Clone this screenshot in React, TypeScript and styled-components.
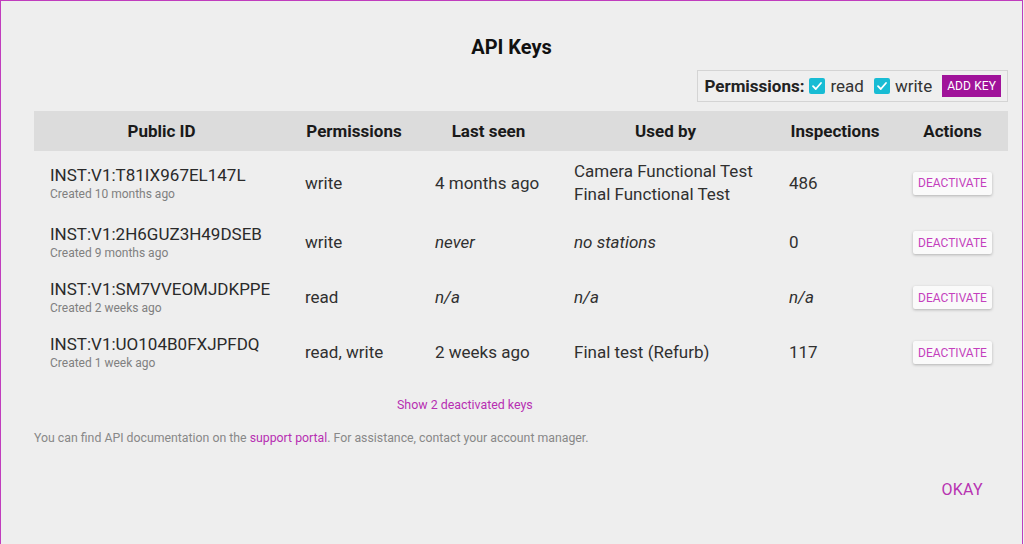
import { createGlobalStyle, styled } from 'styled-components';

interface KeyRow {
    id: string;
    created: string;
    permissions: string;
    lastSeen: string;
    usedBy: string[];
    inspections: string;
    muted?: boolean;
}

const keys: KeyRow[] = [
    {
        id: 'INST:V1:T81IX967EL147L',
        created: 'Created 10 months ago',
        permissions: 'write',
        lastSeen: '4 months ago',
        usedBy: ['Camera Functional Test', 'Final Functional Test'],
        inspections: '486',
    },
    {
        id: 'INST:V1:2H6GUZ3H49DSEB',
        created: 'Created 9 months ago',
        permissions: 'write',
        lastSeen: 'never',
        usedBy: ['no stations'],
        inspections: '0',
        muted: true,
    },
    {
        id: 'INST:V1:SM7VVEOMJDKPPE',
        created: 'Created 2 weeks ago',
        permissions: 'read',
        lastSeen: 'n/a',
        usedBy: ['n/a'],
        inspections: 'n/a',
        muted: true,
    },
    {
        id: 'INST:V1:UO104B0FXJPFDQ',
        created: 'Created 1 week ago',
        permissions: 'read, write',
        lastSeen: '2 weeks ago',
        usedBy: ['Final test (Refurb)'],
        inspections: '117',
    },
];

const columns = ['Public ID', 'Permissions', 'Last seen', 'Used by', 'Inspections', 'Actions'];

const Check = () => (
    <CheckBox>
        <svg width="12" height="12" viewBox="0 0 12 12">
            <path d="M2 6.2 L4.8 9 L10 3" fill="none" stroke="#fff" strokeWidth="1.8" strokeLinecap="round" strokeLinejoin="round" />
        </svg>
    </CheckBox>
);

export default function App() {
    return (
        <>
            <GlobalStyle />
            <Page>
                <Title>API Keys</Title>
                <Toolbar>
                    <PermBox>
                        <PermLabel>Permissions:</PermLabel>
                        <Option>
                            <Check />
                            read
                        </Option>
                        <Option>
                            <Check />
                            write
                        </Option>
                        <AddButton>Add key</AddButton>
                    </PermBox>
                </Toolbar>
                <Table>
                    <colgroup>
                        <col style={{ width: 255 }} />
                        <col style={{ width: 130 }} />
                        <col style={{ width: 139 }} />
                        <col style={{ width: 215 }} />
                        <col style={{ width: 124 }} />
                        <col style={{ width: 111 }} />
                    </colgroup>
                    <thead>
                        <tr>
                            {columns.map((c) => (
                                <Th key={c}>{c}</Th>
                            ))}
                        </tr>
                    </thead>
                    <tbody>
                        {keys.map((k) => (
                            <tr key={k.id}>
                                <Td>
                                    <KeyId>{k.id}</KeyId>
                                    <Created>{k.created}</Created>
                                </Td>
                                <Td>{k.permissions}</Td>
                                <Td $italic={k.muted}>{k.lastSeen}</Td>
                                <Td $italic={k.muted}>
                                    {k.usedBy.map((u) => (
                                        <div key={u}>{u}</div>
                                    ))}
                                </Td>
                                <Td $italic={k.inspections === 'n/a'}>{k.inspections}</Td>
                                <ActionCell>
                                    <DeactivateButton>Deactivate</DeactivateButton>
                                </ActionCell>
                            </tr>
                        ))}
                    </tbody>
                </Table>
                <ShowRow>
                    <LinkText>Show 2 deactivated keys</LinkText>
                </ShowRow>
                <Footnote>
                    You can find API documentation on the <LinkText>support portal</LinkText>. For assistance, contact
                    your account manager.
                </Footnote>
                <Actions>
                    <OkayButton>Okay</OkayButton>
                </Actions>
            </Page>
        </>
    );
}

const GlobalStyle = createGlobalStyle`
    html, body {
        margin: 0;
        padding: 0;
        background: #eeeeee;
    }
    * {
        box-sizing: border-box;
    }
`;

const Page = styled.div`
    width: 1023px;
    height: 544px;
    overflow: hidden;
    border: 1px solid #c03cbd;
    border-bottom: none;
    background: #eeeeee;
    padding: 35px 14px 0 33px;
    font-family: Roboto, 'Liberation Sans', sans-serif;
    color: #222;
`;

const Title = styled.h1`
    margin: 0 -14px 0 -33px;
    text-align: center;
    font-size: 20px;
    line-height: 23px;
    font-weight: 700;
    color: #111;
`;

const Toolbar = styled.div`
    display: flex;
    justify-content: flex-end;
    margin-top: 11px;
`;

const PermBox = styled.div`
    display: flex;
    align-items: center;
    height: 32px;
    padding: 0 6px 0 6px;
    border: 1px solid #d4d4d4;
    background: #efefef;
    font-size: 17px;
`;

const PermLabel = styled.span`
    font-weight: 700;
    color: #222;
    margin-right: 5px;
`;

const Option = styled.span`
    display: flex;
    align-items: center;
    gap: 5px;
    margin-right: 10px;
    color: #333;
`;

const CheckBox = styled.span`
    display: inline-flex;
    align-items: center;
    justify-content: center;
    width: 16px;
    height: 16px;
    border-radius: 2px;
    background: #18bcd4;
`;

const AddButton = styled.button`
    height: 22px;
    padding: 0 5px;
    border: none;
    background: #a0139a;
    color: #fff;
    font-family: inherit;
    font-size: 12px;
    text-transform: uppercase;
    letter-spacing: 0.1px;
`;

const Table = styled.table`
    width: 974px;
    margin-top: 9px;
    border-collapse: collapse;
    table-layout: fixed;
`;

const Th = styled.th`
    height: 40px;
    padding: 0;
    background: #dcdcdc;
    font-size: 17px;
    font-weight: 700;
    color: #1a1a1a;
    text-align: center;
`;

const Td = styled.td<{ $italic?: boolean }>`
    padding: 9px 16px;
    font-size: 17px;
    line-height: 23px;
    color: #303030;
    vertical-align: middle;
    font-style: ${(p) => (p.$italic ? 'italic' : 'normal')};
`;

const KeyId = styled.div`
    font-size: 17px;
    line-height: 21px;
    color: #2a2a2a;
`;

const Created = styled.div`
    font-size: 12px;
    line-height: 16px;
    color: #808080;
`;

const ActionCell = styled.td`
    padding: 9px 0;
    text-align: center;
    vertical-align: middle;
`;

const DeactivateButton = styled.button`
    height: 23px;
    width: 79px;
    padding: 0;
    border: none;
    border-radius: 2px;
    background: #fafafa;
    box-shadow: 0 1px 3px rgba(0, 0, 0, 0.25);
    color: #c43fbd;
    font-family: inherit;
    font-size: 12px;
    text-transform: uppercase;
`;

const ShowRow = styled.div`
    margin-top: 17px;
    padding-left: 363px;
    font-size: 12.4px;
    line-height: 15px;
`;

const LinkText = styled.span`
    color: #b72fb2;
`;

const Footnote = styled.p`
    margin: 19px 0 0;
    font-size: 12.3px;
    line-height: 15px;
    color: #888;
`;

const Actions = styled.div`
    display: flex;
    justify-content: flex-end;
    margin-top: 34px;
    padding-right: 25px;
`;

const OkayButton = styled.button`
    border: none;
    background: none;
    padding: 0;
    color: #b733b1;
    font-family: inherit;
    font-size: 16px;
    line-height: 19px;
    text-transform: uppercase;
    letter-spacing: 0.3px;
`;
